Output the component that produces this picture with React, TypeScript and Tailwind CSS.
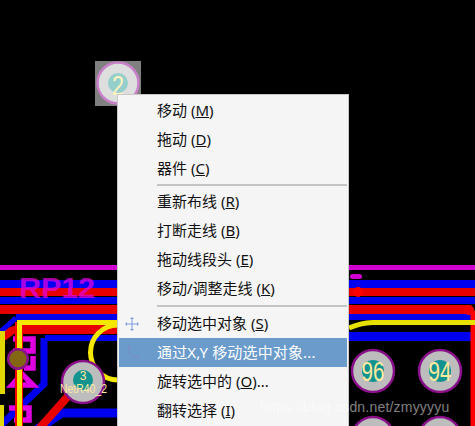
import React from 'react'

type Item = { label: string; key?: string; tail?: string; icon?: 'move' | 'xy'; active?: boolean; sep?: 'a' | 'b' }

const items: Item[] = [
  { label: '移动', key: 'M' },
  { label: '拖动', key: 'D' },
  { label: '器件', key: 'C' },
  { label: '', sep: 'a' },
  { label: '重新布线', key: 'R' },
  { label: '打断走线', key: 'B' },
  { label: '拖动线段头', key: 'E' },
  { label: '移动/调整走线', key: 'K' },
  { label: '', sep: 'b' },
  { label: '移动选中对象', key: 'S', icon: 'move' },
  { label: '通过X,Y 移动选中对象...', icon: 'xy', active: true },
  { label: '旋转选中的', key: 'O', tail: '...' },
  { label: '翻转选择', key: 'I' },
]

const sans = "'Liberation Sans', sans-serif"

function Pad({ x, y, text }: { x: number; y: number; text?: string }) {
  return (
    <g>
      <circle cx={x} cy={y} r={21} fill="#bdbdbd" stroke="#8a0f8a" strokeWidth={2.5} />
      <circle cx={x} cy={y} r={11} fill="#12938f" />
      {text && (
        <text x={x} y={y + 10} textAnchor="middle" fontSize={27} fill="#ffe9a0" fontFamily={sans} textLength={23} lengthAdjust="spacingAndGlyphs">
          {text}
        </text>
      )}
    </g>
  )
}

function Board() {
  return (
    <svg className="absolute inset-0" width={475} height={426} viewBox="0 0 475 426">
      {/* long horizontal tracks */}
      <rect x={0} y={265} width={475} height={5} fill="#d000d0" />
      <rect x={0} y={280} width={475} height={8} fill="#0000f0" />
      <rect x={0} y={288} width={475} height={8} fill="#e80000" />
      <rect x={0} y={297} width={475} height={7} fill="#0000f0" />
      <rect x={0} y={305} width={470} height={9} fill="#e80000" />
      <rect x={16} y={314} width={459} height={6} fill="#0000f0" />
      <rect x={350} y={274} width={12} height={5} rx={2.5} fill="#d000d0" />
      <circle cx={358} cy={292} r={5} fill="#ff0000" />

      {/* RP12 silk */}
      <text x={19} y={298} fontSize={29} fontWeight="bold" fontFamily={sans} fill="#e000e0" opacity={0.75} textLength={76} lengthAdjust="spacingAndGlyphs">
        RP12
      </text>

      {/* left area */}
      <path d="M0 334 L8 328 Q14 325 22 325 L120 325 L120 334 L14 334 L6 340 L0 340 Z" fill="#e80000" />
      <rect x={45} y={335} width={75} height={6} fill="#0000f0" />
      <path d="M44 338 L44 384 L0 426" fill="none" stroke="#0000f0" strokeWidth={7} />
      <path d="M120 413 L62 413 L36 430" fill="none" stroke="#0000f0" strokeWidth={9} />
      <path d="M16 318 L0 332" fill="none" stroke="#0000f0" strokeWidth={5} />
      <path d="M13 339 L33 339 L33 351 L13 351 M33 356 L33 368 L24 368 M12 385 L33 385 L22 374 Z M9 408 L29 408 L29 420 L14 420" fill="none" stroke="#e000e0" strokeWidth={5.5} />
      <path d="M19 322 L19 426" stroke="#ff0000" strokeWidth={8} />
      <path d="M70 394 L38 430" stroke="#e80000" strokeWidth={8} />
      <rect x={17} y={322} width={5} height={104} fill="#f5e800" />
      <rect x={17} y={320} width={100} height={5} fill="#f5e800" />
      <rect x={0} y={331} width={5} height={63} fill="#e0d800" />
      <rect x={0} y={405} width={4} height={21} fill="#e0d800" />
      <circle cx={18} cy={359} r={11} fill="#8a0f8a" />
      <circle cx={18} cy={359} r={8.5} fill="#836614" />
      <circle cx={118} cy={352.5} r={27.5} fill="none" stroke="#f5e800" strokeWidth={5} />

      {/* pad 3 */}
      <circle cx={83} cy={382} r={21} fill="#bdbdbd" stroke="#8a0f8a" strokeWidth={2.5} />
      <circle cx={83} cy={380} r={10} fill="#12938f" />
      <text x={83} y={380} textAnchor="middle" fontSize={12} fill="#ffe9a0" fontFamily={sans}>
        3
      </text>
      <text x={83.5} y={393} textAnchor="middle" fontSize={12} fill="#ffe9a0" fontFamily={sans} textLength={47} lengthAdjust="spacingAndGlyphs">
        NetR40_2
      </text>

      {/* right area */}
      <rect x={349} y={332} width={122} height={9} fill="#0000f0" />
      <path d="M470 309 Q473 310 473 316 L473 426" fill="none" stroke="#ff0000" strokeWidth={5} />
      <circle cx={469} cy={310} r={5} fill="#f00000" />
      <path d="M349 328 Q360 323 373 322.5 L475 322.5" fill="none" stroke="#e8e000" strokeWidth={5} />
      <Pad x={373} y={371} text="96" />
      <Pad x={440} y={371} text="94" />
      <Pad x={373} y={438} />
      <Pad x={440} y={438} />

      {/* selected pad 2 */}
      <rect x={95} y={61} width={46} height={45} fill="#808080" />
      <circle cx={118} cy={83} r={20.5} fill="#dedede" stroke="#c880c8" strokeWidth={2.5} />
      <circle cx={118} cy={83} r={10} fill="#94cfcb" />
      <text x={118} y={95} textAnchor="middle" fontSize={27} fill="#fff3c0" fontFamily={sans} textLength={12} lengthAdjust="spacingAndGlyphs">
        2
      </text>
    </svg>
  )
}

function MoveIcon() {
  return (
    <svg width={14} height={14} viewBox="0 0 14 14" fill="none" stroke="#7f9be0" strokeWidth={1}>
      <path d="M0 7H14M7 0V14M1.5 5.5V8.5M12.5 5.5V8.5M5.5 1.5H8.5M5.5 12.5H8.5" />
    </svg>
  )
}

function XyIcon() {
  return (
    <svg width={15} height={15} viewBox="0 0 15 15" fill="none" stroke="#7a8cc8" strokeWidth={1}>
      <path d="M4 1V7L8 12H14M2 3L4 1L6 3M12 10L14 12L12 14" />
    </svg>
  )
}

export default function App() {
  return (
    <div className="relative h-[426px] w-[475px] overflow-hidden bg-black font-['Noto_Sans','Noto_Sans_CJK_SC',sans-serif]">
      <Board />

      {/* context menu */}
      <div className="absolute left-[117px] top-[94px] h-[340px] w-[232px] border border-[#c8c8c8] bg-[#f5f5f5] px-px pt-px text-[15px] text-[#111111]">
        {items.map((item, i) =>
          item.sep ? (
            <div
              key={i}
              className={`ml-[38px] h-[2px] bg-[#c4c4c4] ${item.sep === 'a' ? 'my-[1px]' : 'my-[2px]'}`}
            />
          ) : (
            <div
              key={i}
              className={`flex h-[29px] items-center ${item.active ? 'bg-[#6a9bca] text-white' : ''}`}
            >
              <span className="flex w-[38px] justify-center pr-[12px]">
                {item.icon === 'move' && <MoveIcon />}
                {item.icon === 'xy' && <XyIcon />}
              </span>
              <span className={`whitespace-pre ${item.active ? 'tracking-[0.15px]' : ''}`}>
                {item.label}
                {item.key && (
                  <>
                    {' ('}
                    <span className="underline">{item.key}</span>
                    {')'}
                  </>
                )}
                {item.tail}
              </span>
            </div>
          ),
        )}
      </div>

      {/* watermark */}
      <div className="absolute left-[260px] top-[398px] font-['Liberation_Sans',sans-serif] text-[14px] leading-[18px] tracking-[0.2px] text-white/50">
        https://blog.csdn.net/zmyyyyu
      </div>
    </div>
  )
}
